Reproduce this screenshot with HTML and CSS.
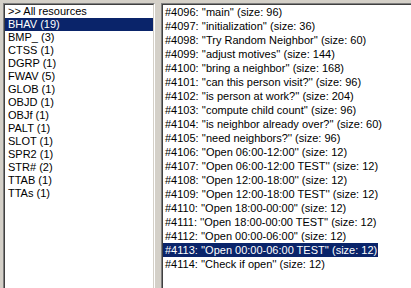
FILE: index.html
```html
<!DOCTYPE html>
<html lang="en">
<head>
    <meta charset="UTF-8">
    <title>Resources</title>
    <link rel="stylesheet" href="styles.css">
</head>
<body>

    <div class="window">
        <!-- Resource types -->
        <div class="panel types">
            <div class="inner">
                <div class="item">&gt;&gt; All resources</div>
                <div class="item selected">BHAV (19)</div>
                <div class="item">BMP_ (3)</div>
                <div class="item">CTSS (1)</div>
                <div class="item">DGRP (1)</div>
                <div class="item">FWAV (5)</div>
                <div class="item">GLOB (1)</div>
                <div class="item">OBJD (1)</div>
                <div class="item">OBJf (1)</div>
                <div class="item">PALT (1)</div>
                <div class="item">SLOT (1)</div>
                <div class="item">SPR2 (1)</div>
                <div class="item">STR# (2)</div>
                <div class="item">TTAB (1)</div>
                <div class="item">TTAs (1)</div>
            </div>
        </div>

        <!-- Resources of the selected type -->
        <div class="panel entries">
            <div class="inner">
                <div class="item">#4096: ''main'' (size: 96)</div>
                <div class="item">#4097: ''initialization'' (size: 36)</div>
                <div class="item">#4098: ''Try Random Neighbor'' (size: 60)</div>
                <div class="item">#4099: ''adjust motives'' (size: 144)</div>
                <div class="item">#4100: ''bring a neighbor'' (size: 168)</div>
                <div class="item">#4101: ''can this person visit?'' (size: 96)</div>
                <div class="item">#4102: ''is person at work?'' (size: 204)</div>
                <div class="item">#4103: ''compute child count'' (size: 96)</div>
                <div class="item">#4104: ''is neighbor already over?'' (size: 60)</div>
                <div class="item">#4105: ''need neighbors?'' (size: 96)</div>
                <div class="item">#4106: ''Open 06:00-12:00'' (size: 12)</div>
                <div class="item">#4107: ''Open 06:00-12:00 TEST'' (size: 12)</div>
                <div class="item">#4108: ''Open 12:00-18:00'' (size: 12)</div>
                <div class="item">#4109: ''Open 12:00-18:00 TEST'' (size: 12)</div>
                <div class="item">#4110: ''Open 18:00-00:00'' (size: 12)</div>
                <div class="item">#4111: ''Open 18:00-00:00 TEST'' (size: 12)</div>
                <div class="item">#4112: ''Open 00:00-06:00'' (size: 12)</div>
                <div class="item selected">#4113: ''Open 00:00-06:00 TEST'' (size: 12)</div>
                <div class="item">#4114: ''Check if open'' (size: 12)</div>
            </div>
        </div>
    </div>

</body>
</html>
```

FILE: styles.css
```css
* {
    margin: 0;
    padding: 0;
    box-sizing: border-box;
}

body {
    font-family: "Liberation Sans", Arial, sans-serif;
    font-size: 11px;
    background-color: #d4d0c8;
    overflow: hidden;
}

.window {
    display: flex;
    gap: 6px;
    padding: 3px 0 0 3px;
    height: 100vh;
}

/* Sunken 3D frame, cut off by the window bottom */
.panel {
    border: 1px solid;
    border-bottom: 0;
    border-color: #808080 #ffffff #ffffff #808080;
}

.inner {
    border: 1px solid;
    border-bottom: 0;
    border-color: #404040 #d4d0c8 #d4d0c8 #404040;
    background-color: white;
    height: 100%;
}

.types {
    width: 152px;
}

.types .item {
    height: 13px;
    line-height: 13px;
    padding-left: 3px;
}

.entries {
    flex: 1;
    border-right: 0;
}

.entries .inner {
    border-right: 0;
    display: flex;
    flex-direction: column;
    align-items: flex-start;
}

.entries .item {
    height: 14px;
    line-height: 14px;
    padding: 0 1px 0 2px;
    white-space: nowrap;
}

.selected {
    background-color: #0a246a;
    color: white;
}
```
